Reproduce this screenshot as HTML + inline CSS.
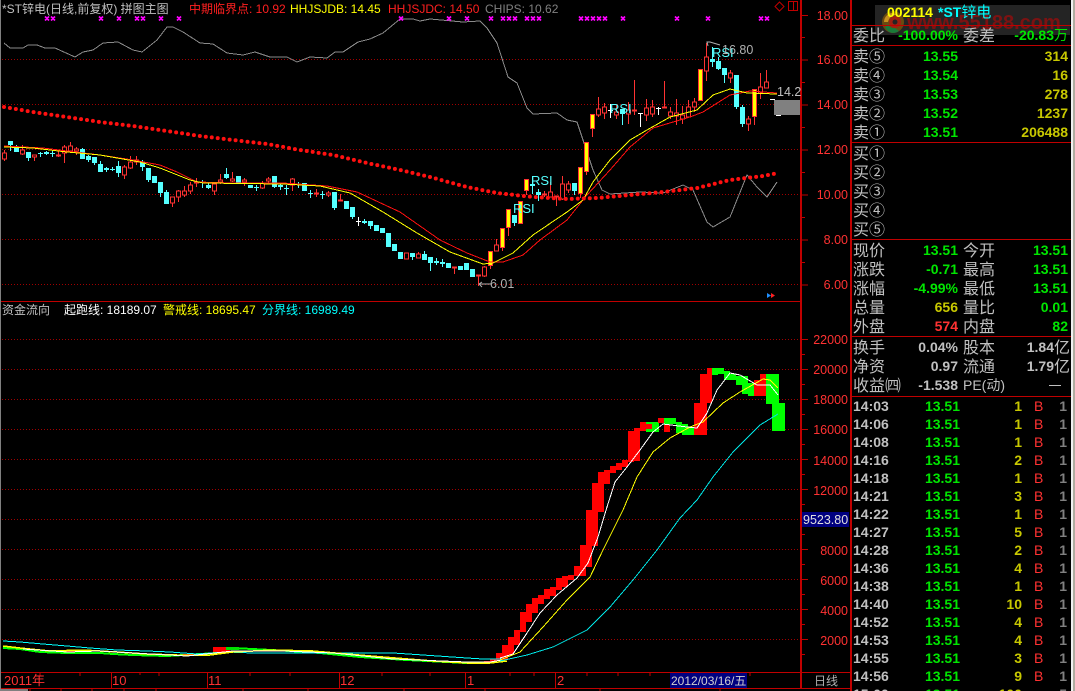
<!DOCTYPE html>
<html><head><meta charset="utf-8">
<style>
html,body{margin:0;padding:0;background:#000;width:1075px;height:691px;overflow:hidden}
svg{display:block}
text{font-family:"Liberation Sans","WenQuanYi Zen Hei","Noto Sans CJK SC",sans-serif;font-size:12px}
.c{font-family:"WenQuanYi Zen Hei","Liberation Sans","Noto Sans CJK SC",sans-serif;font-size:16px;fill:#c0c0c0}
.n{font-size:14px;text-anchor:end;font-weight:bold}
.g{fill:#00e600}.y{fill:#c8c800}.r{fill:#ff3232}.w{fill:#c0c0c0}
.a{font-size:12.5px;text-anchor:end;fill:#ff3232}
.t{font-size:14px;font-weight:bold;fill:#c0c0c0}
.cr{shape-rendering:crispEdges}
.ma{fill:none;shape-rendering:crispEdges}
.dots{fill:none}
</style></head><body>
<svg width="1075" height="691" viewBox="0 0 1075 691" xmlns="http://www.w3.org/2000/svg">
<rect width="1075" height="691" fill="#000"/>
<!-- grid -->
<g class="cr" stroke="#a00000" stroke-dasharray="1 2" fill="none">
<path d="M2 59.5H800M2 104.5H800M2 149.5H800M2 194.5H800M2 239.5H800M2 284.5H800"/>
<path d="M2 339.5H800M2 369.5H800M2 399.5H800M2 429.5H800M2 459.5H800M2 489.5H800M2 519.5H800M2 549.5H800M2 579.5H800M2 609.5H800M2 639.5H800"/>
</g>
<!-- frame -->
<g class="cr" stroke="#c00000" fill="none">
<path d="M0 301.5H800M0 672.5H851M0 688.5H851"/>
<path d="M800.5 0V689M801.5 0V689"/>
<path d="M850.5 0V691M851.5 0V691"/>
<path d="M851 25.5H1071M851 45.5H1071M851 142.5H1071M851 239.5H1071M851 336.5H1071M851 396.5H1071"/>
<path d="M111.5 672V688M207.5 672V688M339.5 672V688M465.5 672V688M555.5 672V688"/>
<path d="M40 672v4M80 672v4M140 672v3M159 672v4M250 672v4M290 672v4M382 672v4M430 672v4M510 672v4M534 672v4M587 672v4M618 672v4M650 672v4M700 672v4M750 672v4"/>
<path d="M30 689v2M61 689v2M92 689v2M124 689v2M156 689v2M243 689v2M308 689v2M404 689v2M485 689v2M600 689v2M720 689v2"/>
<!-- axis ticks -->
<path d="M802 15.5h6M802 60h6M802 105h6M802 150h6M802 195h6M802 240h6M802 285h6M802 37.5h3M802 82.5h3M802 127.5h3M802 172.5h3M802 217.5h3M802 262.5h3"/>
<path d="M802 339.5h6M802 354.5h3M802 369.5h6M802 384.5h3M802 399.5h6M802 414.5h3M802 429.5h6M802 444.5h3M802 459.5h6M802 474.5h3M802 489.5h6M802 504.5h3M802 519.5h6M802 534.5h3M802 549.5h6M802 564.5h3M802 579.5h6M802 594.5h3M802 609.5h6M802 624.5h3M802 639.5h6M802 654.5h3"/>
</g>
<!-- window edges -->
<rect x="0" y="0" width="1" height="691" fill="#808080"/>
<rect x="1071" y="0" width="2" height="691" fill="#f0f0f0"/>
<rect x="1073" y="0" width="2" height="691" fill="#b0aca0"/>
<rect x="0" y="689" width="28" height="2" fill="#808080"/>
<!-- grey line -->
<polyline class="ma" stroke="#8a8a8a" points="4,43 10,48 23,48 28,45 37,45 45,48 55,48 75,57 83,52 93,50 103,43 118,42 133,50 142,52 157,40 167,27 173,27 183,32 200,43 213,44 227,53 243,55 255,52 270,57 287,57 297,62 310,57 327,58 335,52 343,52 358,42 370,39 383,33 400,19 413,19 420,21 430,19 463,22 480,21 487,28 497,43 508,77 517,83 527,108 533,114 557,113 567,120 577,122 583,140 593,170 602,190 610,194 640,192 663,193 683,185 693,190 707,222 713,227 730,217 747,175 757,187 767,197 777,182"/>
<!-- purple marks -->
<path stroke="#ff00ff" fill="none" stroke-width="1.7" d="M45 16.500l4 4m0-4l-4 4M51 16.500l4 4m0-4l-4 4M99 16.500l4 4m0-4l-4 4M117 16.500l4 4m0-4l-4 4M135 16.500l4 4m0-4l-4 4M141 16.500l4 4m0-4l-4 4M159 16.500l4 4m0-4l-4 4M177 16.500l4 4m0-4l-4 4M399 16.500l4 4m0-4l-4 4M447 16.500l4 4m0-4l-4 4M465 16.500l4 4m0-4l-4 4M489 16.500l4 4m0-4l-4 4M501 16.500l4 4m0-4l-4 4M507 16.500l4 4m0-4l-4 4M513 16.500l4 4m0-4l-4 4M525 16.500l4 4m0-4l-4 4M531 16.500l4 4m0-4l-4 4M537 16.500l4 4m0-4l-4 4M579 16.500l4 4m0-4l-4 4M585 16.500l4 4m0-4l-4 4M591 16.500l4 4m0-4l-4 4M597 16.500l4 4m0-4l-4 4M603 16.500l4 4m0-4l-4 4M621 16.500l4 4m0-4l-4 4M675 16.500l4 4m0-4l-4 4M706 16.500l4 4m0-4l-4 4M759 16.500l4 4m0-4l-4 4M765 16.500l4 4m0-4l-4 4"/>
<!-- candles: wicks -->
<g class="cr">
<path fill="none" stroke="#55ffff" d="M10.5 141V151M16.5 145V152M28.5 152V161M40.5 152V157M46.5 151V155M52.5 150V157M82.5 148V159M88.5 155V162M94.5 157V165M100.5 161V172M106.5 167V172M112.5 167V171M118.5 161V177M142.5 160V171M148.5 168V182M160.5 182V197M166.5 190V204M202.5 180V188M208.5 182V189M226.5 168V179M256.5 185V191M274.5 176V188M280.5 183V190M286.5 185V195M298.5 182V188M310.5 190V198M322.5 191V199M334.5 192V210M352.5 207V219M364.5 219V224M370.5 221V229M412.5 253V260M424.5 251V260M430.5 257V271M436.5 258V265M442.5 259V267M514.5 215V226M532.5 176V194M538.5 189V201M574.5 183V195M622.5 109V125M712.5 47V67M718.5 57V70M724.5 68V83M736.5 75V109M742.5 105V127"/>
<path fill="none" stroke="#55ffff" stroke-width="5" d="M10.5 141V145M16.5 147V152M28.5 152V158M40.5 153V154M46.5 152V154M52.5 153V154M82.5 149V159M88.5 156V160M94.5 157V163M100.5 164V172M106.5 168V170M112.5 169V170M118.5 166V173M142.5 162V167M148.5 168V180M154.5 176V183M160.5 182V193M166.5 192V204M202.5 182V183M208.5 185V188M226.5 174V178M238.5 176V184M250.5 185V188M256.5 187V188M274.5 176V187M280.5 185V187M286.5 188V189M298.5 184V185M304.5 183V191M310.5 193V194M322.5 194V195M334.5 192V208M346.5 201V209M352.5 207V217M364.5 221V223M370.5 221V226M376.5 225V231M382.5 228V233M388.5 233V247M394.5 244V251M400.5 252V259M412.5 253V257M424.5 254V260M430.5 257V263M436.5 261V263M442.5 262V264M448.5 263V268M460.5 266V270M466.5 263V270M472.5 269V277M514.5 215V223M532.5 184V186M538.5 192V195M574.5 183V191M622.5 109V114M712.5 59V62M718.5 61V69M724.5 68V75M736.5 75V107M742.5 107V124"/>
<path fill="none" stroke="#ff3232" d="M4.5 150V161M22.5 145V155M34.5 155V161M58.5 150V157M64.5 145V163M70.5 142V151M76.5 147V155M124.5 165V179M130.5 156V169M136.5 156V165M172.5 197V207M178.5 190V202M184.5 186V197M190.5 182V194M196.5 178V187M214.5 182V195M220.5 174V184M232.5 172V182M244.5 178V186M262.5 181V189M268.5 177V183M292.5 178V191M316.5 189V197M328.5 191V197M340.5 194V201M418.5 252V258M454.5 267V274M478.5 275V286M484.5 266V277M490.5 266V269M496.5 239V251M502.5 248V251M508.5 228V236M526.5 191V195M544.5 191V197M550.5 182V197M556.5 196V206M562.5 176V200M568.5 181V193M580.5 194V198M586.5 172V175M592.5 129V137M598.5 97V117M604.5 103V119M616.5 105V119M628.5 102V124M634.5 80V115M646.5 99V121M652.5 100V117M664.5 81V108M670.5 107V119M676.5 99V125M682.5 106V124M688.5 100V117M694.5 98V112M706.5 43V81M730.5 70V83M748.5 116V131M754.5 117V125M760.5 73V99M766.5 70V88"/>
<path fill="#000" stroke="#ff3232" d="M2.5 153h4v6h-4zM20.5 150h4v4h-4zM32.5 155h4v2h-4zM56.5 155h4v1h-4zM62.5 147h4v6h-4zM68.5 146h4v5h-4zM74.5 149h4v2h-4zM122.5 167h4v8h-4zM128.5 162h4v6h-4zM134.5 160h4v2h-4zM170.5 197h4v6h-4zM176.5 191h4v6h-4zM182.5 191h4v4h-4zM188.5 185h4v6h-4zM194.5 182h4v1h-4zM212.5 184h4v7h-4zM218.5 180h4v2h-4zM230.5 179h4v2h-4zM242.5 180h4v2h-4zM260.5 183h4v5h-4zM266.5 179h4v2h-4zM290.5 179h4v6h-4zM314.5 193h4v1h-4zM326.5 193h4v2h-4zM338.5 200h4v1h-4zM404.5 253h4v6h-4zM416.5 254h4v4h-4zM452.5 267h4v1h-4zM476.5 275h4v1h-4zM482.5 267h4v9h-4zM494.5 245h4v6h-4zM542.5 194h4v1h-4zM548.5 192h4v5h-4zM554.5 196h4v1h-4zM560.5 184h4v15h-4zM566.5 184h4v6h-4zM596.5 109h4v6h-4zM602.5 107h4v6h-4zM614.5 112h4v3h-4zM626.5 110h4v4h-4zM632.5 110h4v1h-4zM644.5 108h4v7h-4zM650.5 107h4v7h-4zM662.5 107h4v1h-4zM668.5 112h4v4h-4zM674.5 113h4v3h-4zM680.5 115h4v4h-4zM686.5 107h4v10h-4zM692.5 102h4v5h-4zM704.5 57h4v14h-4zM728.5 73h4v5h-4zM746.5 119h4v5h-4zM758.5 87h4v6h-4zM764.5 82h4v6h-4z"/>
<path fill="none" stroke="#ff3232" stroke-width="5" d="M490.5 251V266M502.5 228V248M508.5 209V228M520.5 201V224M526.5 179V191M580.5 167V194M586.5 142V172M592.5 114V129M700.5 69V101M754.5 89V117"/>
<path fill="none" stroke="#ffff00" stroke-width="3" d="M490.5 252V265M502.5 229V247M508.5 210V227M520.5 202V223M526.5 180V190M580.5 168V193M586.5 143V171M592.5 115V128M700.5 70V100M754.5 90V116"/>
<path fill="none" stroke="#ffffff" d="M358.5 217V226M356 221.5h5M610.5 104V118M608 110.5h5M640.5 113V127M638 113.5h5M658.5 107V115M656 108.5h5"/>
</g>
<!-- MAs -->
<polyline class="ma" stroke="#ff1010" points="4,146 43,148 67,151 100,155 133,160 160,165 177,172 197,182 233,183 283,183 327,186 357,192 400,212 440,240 467,253 490,262 503,262 523,255 540,240 567,220 587,195 610,170 630,147 653,128 690,117 703,112 730,95 750,91 777,93"/>
<polyline class="ma" stroke="#ffff00" points="4,147 33,148 67,152 100,155 140,162 160,168 190,180 203,183 283,184 320,186 350,193 383,212 417,233 450,252 483,264 493,263 513,253 533,235 567,212 583,200 593,182 610,160 630,140 647,130 670,117 697,110 713,95 730,89 747,93 777,94"/>
<!-- red dots -->
<polyline class="dots" stroke="#ff1010" stroke-width="4" stroke-linecap="round" stroke-dasharray="0 6" points="4,107 33,112 67,117 100,122 133,126 167,131 200,136 233,140 267,144 300,150 333,155 367,163 400,170 430,177 467,187 497,193 533,197 567,199 597,198 630,195 663,192 697,188 730,180 763,176 778,173"/>
<!-- top pane text -->
<text x="2" y="13" fill="#c0c0c0">*ST锌电(日线,前复权) 拼图主图</text>
<text x="189" y="13" fill="#ff2020">中期临界点: 10.92</text>
<text x="290" y="13" fill="#ffff00">HHJSJDB: 14.45</text>
<text x="388" y="13" fill="#ff2020">HHJSJDC: 14.50</text>
<text x="485" y="13" fill="#808080">CHIPS: 10.62</text>
<text x="531" y="185" fill="#55ffff" style="font-size:13px">RSI</text>
<text x="513" y="213" fill="#55ffff" style="font-size:13px">RSI</text>
<text x="610" y="113" fill="#55ffff" style="font-size:13px">RSI</text>
<text x="712" y="57" fill="#55ffff" style="font-size:13px">RSI</text>
<text x="722" y="54" fill="#b0b0b0" style="font-size:12.5px">16.80</text>
<path stroke="#b0b0b0" fill="none" d="M708 46l-1-4 3 0 10 3"/>
<text x="490" y="288" fill="#b0b0b0" style="font-size:12.5px">6.01</text>
<path stroke="#b0b0b0" fill="none" d="M479 284h12M479 284l3-2M479 284l3 3"/>
<text x="777" y="96" fill="#c0c0c0" style="font-size:12.5px">14.2</text>
<rect x="774" y="100" width="26" height="15" fill="#808080"/>
<path class="cr" stroke="#fff" d="M770 99.5h5M776 115.5h5"/>
<path stroke="#c00000" fill="none" d="M779.5 2l4.5 4.5-4.5 4.5-4.5-4.5z"/>
<path class="cr" stroke="#c00000" fill="none" d="M788.5 1.5h9v9h-9zM793.5 1.5v9"/>
<path fill="#2090ff" d="M767 293l4 2.500-4 2.500z"/>
<path fill="#ff2020" d="M771 293l4 2.500-4 2.500z"/>
<!-- axis labels upper -->
<g>
<text class="a" x="848" y="20">18.00</text><text class="a" x="848" y="64">16.00</text><text class="a" x="848" y="109">14.00</text><text class="a" x="848" y="154">12.00</text><text class="a" x="848" y="199">10.00</text><text class="a" x="848" y="244">8.00</text><text class="a" x="848" y="289">6.00</text>
<text class="a" x="848" y="344">22000</text><text class="a" x="848" y="374">20000</text><text class="a" x="848" y="404">18000</text><text class="a" x="848" y="434">16000</text><text class="a" x="848" y="465">14000</text><text class="a" x="848" y="495">12000</text><text class="a" x="848" y="555">8000</text><text class="a" x="848" y="585">6000</text><text class="a" x="848" y="615">4000</text><text class="a" x="848" y="645">2000</text>
</g>
<rect x="802" y="512" width="47" height="15" fill="#000080"/>
<text x="803" y="524" fill="#e0e0e0" style="font-size:12.5px">9523.80</text>
<!-- lower pane title -->
<text x="2" y="314" fill="#c0c0c0">资金流向</text>
<text x="64" y="314" fill="#fff">起跑线: 18189.07</text>
<text x="163" y="314" fill="#ffff00">警戒线: 18695.47</text>
<text x="262" y="314" fill="#00ffff">分界线: 16989.49</text>
<!-- flow left bands -->
<polyline class="ma" stroke="#00ff00" stroke-width="2" points="3,648 20,649 40,652 67,653 100,653 113,654 133,655 167,656 217,653 233,648 290,651 320,653 360,657 407,660 467,663 480,663"/>
<path class="cr" fill="#ff0000" d="M65 650h12v2h-12zM213 647h17v5h-17zM183 654h14v2h-14zM484 661h6v2h-6zM490 659h6v3h-6zM496 653h6v8h-6z"/>
<rect class="cr" x="226" y="647" width="13" height="3" fill="#00e000"/>
<polyline class="ma" stroke="#00ffff" stroke-width="1" points="3,641 20,642 43,644 67,646 90,648 117,650 147,651 170,652 197,654 227,652 253,653 293,653 333,653 393,653 423,655 467,658 483,659 507,659"/>
<polyline class="ma" stroke="#ffff00" stroke-width="1.500" points="3,646 20,648 50,651 83,650 117,652 147,654 177,655 210,655 233,652 273,650 313,651 347,654 383,657 433,661 467,663 490,663 507,661"/>
<polyline class="ma" stroke="#ffffff" points="23,649 67,652 100,651 133,653 187,656 233,651 283,651 333,653 393,659 467,662 490,662 507,659"/>
<!-- flow bars -->
<g class="cr">
<path fill="#00ff00" d="M646 422h6v10h-6zM652 422h7v10h-7zM664 418h6v7h-6zM670 418h6v6h-6zM676 422h6v11h-6zM682 424h6v11h-6zM688 427h6v8h-6zM712 368h6v7h-6zM718 368h6v6h-6zM724 371h6v9h-6zM730 374h6v6h-6zM736 376h6v9h-6zM742 376h6v18h-6zM748 383h6v13h-6zM766 374h6v30h-6zM772 374h7v57h-7zM779 403h6v28h-6z"/>
<path fill="#ff0000" d="M502 645h6v15h-6zM508 637h6v18h-6zM514 630h6v15h-6zM520 612h6v20h-6zM526 604h6v18h-6zM532 598h6v15h-6zM538 595h6v9h-6zM544 589h6v10h-6zM550 587h6v9h-6zM556 578h6v12h-6zM562 576h6v11h-6zM568 575h6v5h-6zM574 566h6v10h-6zM580 545h6v31h-6zM586 510h6v57h-6zM592 483h6v63h-6zM598 472h6v40h-6zM604 470h6v14h-6zM610 466h6v7h-6zM616 463h6v7h-6zM622 460h6v7h-6zM628 431h6v31h-6zM634 428h6v33h-6zM640 422h6v9h-6zM646 424h6v5h-6zM658 418h6v5h-6zM664 425h6v7h-6zM694 403h6v32h-6zM700 374h7v61h-7zM707 368h5v35h-5zM754 380h6v16h-6zM760 374h6v22h-6z"/>
</g>
<polyline class="ma" stroke="#00e6e6" points="500,661 527,655 553,647 587,630 610,607 633,580 657,550 680,518 697,500 713,477 733,452 760,425 778,414"/>
<polyline class="ma" stroke="#ffff00" points="500,660 520,652 543,627 567,600 590,577 603,550 623,510 637,477 653,452 670,438 690,427 703,422 723,403 740,392 763,379 770,380 778,388"/>
<polyline class="ma" stroke="#ffffff" points="500,658 513,654 527,633 540,613 557,595 577,578 588,563 598,537 607,507 615,482 627,467 640,450 653,432 663,424 687,427 697,428 707,413 717,390 730,373 740,375 757,385 770,385 778,395"/>
<!-- date axis -->
<rect x="670" y="673" width="77" height="15" fill="#000080"/>
<text x="671" y="685" fill="#d0d0d0">2012/03/16/五</text>
<g fill="#ff3232">
<text x="4" y="685" style="font-size:13px">2011年</text>
<text x="112" y="685" style="font-size:13px">10</text>
<text x="208" y="685" style="font-size:13px">11</text>
<text x="340" y="685" style="font-size:13px">12</text>
<text x="467" y="685" style="font-size:13px">1</text>
<text x="557" y="685" style="font-size:13px">2</text>
</g>
<text x="814" y="685" fill="#b0b0b0" style="font-size:12px">日线</text>
<!-- watermark -->
<rect x="875" y="5" width="195" height="30" fill="#242424"/>
<circle cx="893" cy="22" r="11" fill="#6a4a10"/>
<path d="M884 22a9 9 0 0 1 9-9l6 2a9 9 0 0 0-11 7z" fill="#c89020"/>
<path d="M885 27a9 9 0 0 0 14 4l-4-3a6 6 0 0 1-7-4z" fill="#1a7a3a"/>
<circle cx="895" cy="22" r="6" fill="#a02010"/>
<circle cx="895" cy="22" r="2.500" fill="#242424"/>
<text x="907" y="29" fill="#7c1212" style="font-size:20px;font-weight:bold">www.55188.com</text>
<rect x="851" y="25" width="220" height="1" fill="#c00000"/>
<text x="887" y="17" fill="#ffff00" style="font-size:14px;font-weight:bold">002114</text>
<text x="938" y="17" fill="#00ffff" style="font-size:15px"><tspan style="font-size:14px;font-weight:bold">*ST</tspan>锌电</text>
<!-- quote panel -->
<text class="c" x="853" y="41">委比</text>
<text class="n g" x="958" y="40">-100.00%</text>
<text class="c" x="963" y="41">委差</text>
<text class="n g" x="1068" y="40"><tspan>-20.83</tspan><tspan class="c" style="font-size:14px;fill:#00e600;font-weight:normal">万</tspan></text>
<text class="c" x="853" y="62">卖⑤</text><text class="n g" x="958" y="61">13.55</text><text class="n y" x="1068" y="61">314</text>
<text class="c" x="853" y="81">卖④</text><text class="n g" x="958" y="80">13.54</text><text class="n y" x="1068" y="80">16</text>
<text class="c" x="853" y="100">卖③</text><text class="n g" x="958" y="99">13.53</text><text class="n y" x="1068" y="99">278</text>
<text class="c" x="853" y="119">卖②</text><text class="n g" x="958" y="118">13.52</text><text class="n y" x="1068" y="118">1237</text>
<text class="c" x="853" y="138">卖①</text><text class="n g" x="958" y="137">13.51</text><text class="n y" x="1068" y="137">206488</text>
<text class="c" x="853" y="159">买①</text>
<text class="c" x="853" y="178">买②</text>
<text class="c" x="853" y="197">买③</text>
<text class="c" x="853" y="216">买④</text>
<text class="c" x="853" y="235">买⑤</text>
<text class="c" x="853" y="256">现价</text><text class="n g" x="958" y="255">13.51</text><text class="c" x="963" y="256">今开</text><text class="n g" x="1068" y="255">13.51</text>
<text class="c" x="853" y="275">涨跌</text><text class="n g" x="958" y="274">-0.71</text><text class="c" x="963" y="275">最高</text><text class="n g" x="1068" y="274">13.51</text>
<text class="c" x="853" y="294">涨幅</text><text class="n g" x="958" y="293">-4.99%</text><text class="c" x="963" y="294">最低</text><text class="n g" x="1068" y="293">13.51</text>
<text class="c" x="853" y="313">总量</text><text class="n y" x="958" y="312">656</text><text class="c" x="963" y="313">量比</text><text class="n g" x="1068" y="312">0.01</text>
<text class="c" x="853" y="332">外盘</text><text class="n r" x="958" y="331">574</text><text class="c" x="963" y="332">内盘</text><text class="n g" x="1068" y="331">82</text>
<text class="c" x="853" y="353">换手</text><text class="n w" x="958" y="352">0.04%</text><text class="c" x="963" y="353">股本</text><text class="n w" x="1054" y="352">1.84</text><text class="c" x="1054" y="353">亿</text>
<text class="c" x="853" y="372">净资</text><text class="n w" x="958" y="371">0.97</text><text class="c" x="963" y="372">流通</text><text class="n w" x="1054" y="371">1.79</text><text class="c" x="1054" y="372">亿</text>
<text class="c" x="853" y="391">收益㈣</text><text class="n w" x="958" y="390">-1.538</text><text class="c" x="963" y="390" style="font-size:14px">PE(动)</text><path class="cr" stroke="#c0c0c0" d="M1049 385.500h12"/>
<!-- trades -->
<g>
<text class="t" x="853" y="411">14:03</text><text class="n g" x="960" y="411">13.51</text><text class="n y" x="1022" y="411">1</text><text class="n r" x="1034" y="411" style="text-anchor:start;font-weight:normal">B</text><text class="n" x="1067" y="411" fill="#808080">1</text>
<text class="t" x="853" y="429">14:06</text><text class="n g" x="960" y="429">13.51</text><text class="n y" x="1022" y="429">1</text><text class="n r" x="1034" y="429" style="text-anchor:start;font-weight:normal">B</text><text class="n" x="1067" y="429" fill="#808080">1</text>
<text class="t" x="853" y="447">14:08</text><text class="n g" x="960" y="447">13.51</text><text class="n y" x="1022" y="447">1</text><text class="n r" x="1034" y="447" style="text-anchor:start;font-weight:normal">B</text><text class="n" x="1067" y="447" fill="#808080">1</text>
<text class="t" x="853" y="465">14:16</text><text class="n g" x="960" y="465">13.51</text><text class="n y" x="1022" y="465">2</text><text class="n r" x="1034" y="465" style="text-anchor:start;font-weight:normal">B</text><text class="n" x="1067" y="465" fill="#808080">1</text>
<text class="t" x="853" y="483">14:18</text><text class="n g" x="960" y="483">13.51</text><text class="n y" x="1022" y="483">1</text><text class="n r" x="1034" y="483" style="text-anchor:start;font-weight:normal">B</text><text class="n" x="1067" y="483" fill="#808080">1</text>
<text class="t" x="853" y="501">14:21</text><text class="n g" x="960" y="501">13.51</text><text class="n y" x="1022" y="501">3</text><text class="n r" x="1034" y="501" style="text-anchor:start;font-weight:normal">B</text><text class="n" x="1067" y="501" fill="#808080">1</text>
<text class="t" x="853" y="519">14:22</text><text class="n g" x="960" y="519">13.51</text><text class="n y" x="1022" y="519">1</text><text class="n r" x="1034" y="519" style="text-anchor:start;font-weight:normal">B</text><text class="n" x="1067" y="519" fill="#808080">1</text>
<text class="t" x="853" y="537">14:27</text><text class="n g" x="960" y="537">13.51</text><text class="n y" x="1022" y="537">5</text><text class="n r" x="1034" y="537" style="text-anchor:start;font-weight:normal">B</text><text class="n" x="1067" y="537" fill="#808080">1</text>
<text class="t" x="853" y="555">14:28</text><text class="n g" x="960" y="555">13.51</text><text class="n y" x="1022" y="555">2</text><text class="n r" x="1034" y="555" style="text-anchor:start;font-weight:normal">B</text><text class="n" x="1067" y="555" fill="#808080">1</text>
<text class="t" x="853" y="573">14:36</text><text class="n g" x="960" y="573">13.51</text><text class="n y" x="1022" y="573">4</text><text class="n r" x="1034" y="573" style="text-anchor:start;font-weight:normal">B</text><text class="n" x="1067" y="573" fill="#808080">1</text>
<text class="t" x="853" y="591">14:38</text><text class="n g" x="960" y="591">13.51</text><text class="n y" x="1022" y="591">1</text><text class="n r" x="1034" y="591" style="text-anchor:start;font-weight:normal">B</text><text class="n" x="1067" y="591" fill="#808080">1</text>
<text class="t" x="853" y="609">14:40</text><text class="n g" x="960" y="609">13.51</text><text class="n y" x="1022" y="609">10</text><text class="n r" x="1034" y="609" style="text-anchor:start;font-weight:normal">B</text><text class="n" x="1067" y="609" fill="#808080">1</text>
<text class="t" x="853" y="627">14:52</text><text class="n g" x="960" y="627">13.51</text><text class="n y" x="1022" y="627">4</text><text class="n r" x="1034" y="627" style="text-anchor:start;font-weight:normal">B</text><text class="n" x="1067" y="627" fill="#808080">1</text>
<text class="t" x="853" y="645">14:53</text><text class="n g" x="960" y="645">13.51</text><text class="n y" x="1022" y="645">4</text><text class="n r" x="1034" y="645" style="text-anchor:start;font-weight:normal">B</text><text class="n" x="1067" y="645" fill="#808080">1</text>
<text class="t" x="853" y="663">14:55</text><text class="n g" x="960" y="663">13.51</text><text class="n y" x="1022" y="663">3</text><text class="n r" x="1034" y="663" style="text-anchor:start;font-weight:normal">B</text><text class="n" x="1067" y="663" fill="#808080">1</text>
<text class="t" x="853" y="681">14:56</text><text class="n g" x="960" y="681">13.51</text><text class="n y" x="1022" y="681">9</text><text class="n r" x="1034" y="681" style="text-anchor:start;font-weight:normal">B</text><text class="n" x="1067" y="681" fill="#808080">1</text>
<text class="t" x="853" y="699">15:00</text><text class="n g" x="960" y="699">13.51</text><text class="n y" x="1022" y="699">100</text><text class="n" x="1067" y="699" fill="#808080">5</text>
</g>
</svg>
</body></html>
